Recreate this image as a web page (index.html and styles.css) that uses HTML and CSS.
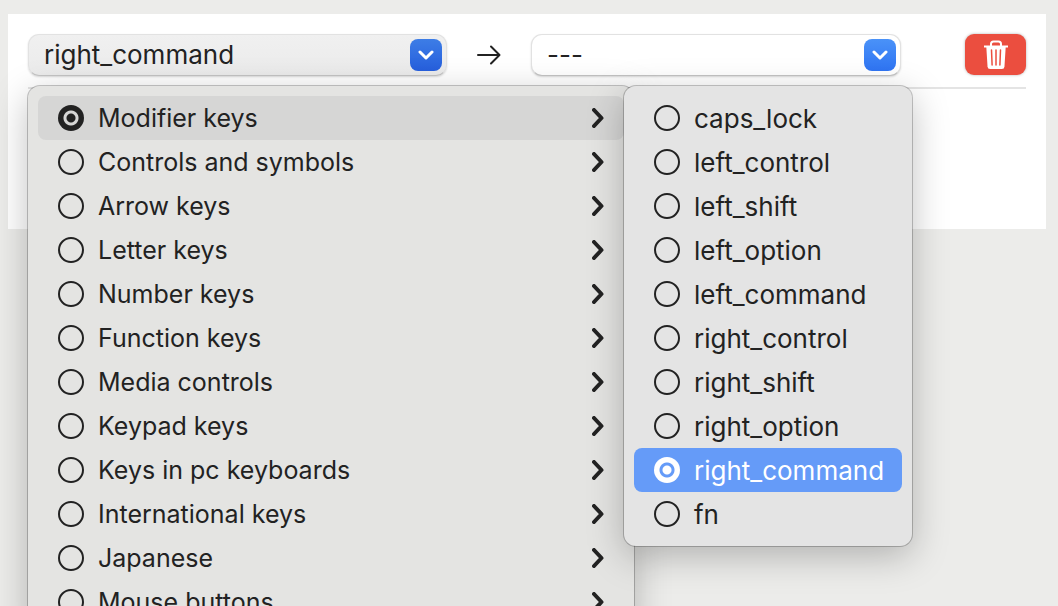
FILE: index.html
```html
<!DOCTYPE html>
<html lang="en">
<head>
  <meta charset="UTF-8">
  <title>Simple Modifications</title>
  <link rel="stylesheet" href="styles.css">
</head>
<body>
  <main class="panel">
    <div class="row">
      <div class="field">
        <select class="picker picker-open" aria-label="From key">
          <option>right_command</option>
        </select>
        <span class="picker-badge badge-pressed">
          <svg width="16" height="10" viewBox="0 0 16 10"><path d="M2 2l6 6 6-6"/></svg>
        </span>

        <!-- Key category menu -->
        <div class="menu main-menu">
          <label class="item item-active"><input type="radio" name="category" checked>Modifier keys<svg class="more" viewBox="0 0 12 20"><path d="M2 2l7.500 8L2 18"/></svg></label>
          <label class="item"><input type="radio" name="category">Controls and symbols<svg class="more" viewBox="0 0 12 20"><path d="M2 2l7.500 8L2 18"/></svg></label>
          <label class="item"><input type="radio" name="category">Arrow keys<svg class="more" viewBox="0 0 12 20"><path d="M2 2l7.500 8L2 18"/></svg></label>
          <label class="item"><input type="radio" name="category">Letter keys<svg class="more" viewBox="0 0 12 20"><path d="M2 2l7.500 8L2 18"/></svg></label>
          <label class="item"><input type="radio" name="category">Number keys<svg class="more" viewBox="0 0 12 20"><path d="M2 2l7.500 8L2 18"/></svg></label>
          <label class="item"><input type="radio" name="category">Function keys<svg class="more" viewBox="0 0 12 20"><path d="M2 2l7.500 8L2 18"/></svg></label>
          <label class="item"><input type="radio" name="category">Media controls<svg class="more" viewBox="0 0 12 20"><path d="M2 2l7.500 8L2 18"/></svg></label>
          <label class="item"><input type="radio" name="category">Keypad keys<svg class="more" viewBox="0 0 12 20"><path d="M2 2l7.500 8L2 18"/></svg></label>
          <label class="item"><input type="radio" name="category">Keys in pc keyboards<svg class="more" viewBox="0 0 12 20"><path d="M2 2l7.500 8L2 18"/></svg></label>
          <label class="item"><input type="radio" name="category">International keys<svg class="more" viewBox="0 0 12 20"><path d="M2 2l7.500 8L2 18"/></svg></label>
          <label class="item"><input type="radio" name="category">Japanese<svg class="more" viewBox="0 0 12 20"><path d="M2 2l7.500 8L2 18"/></svg></label>
          <label class="item"><input type="radio" name="category">Mouse buttons<svg class="more" viewBox="0 0 12 20"><path d="M2 2l7.500 8L2 18"/></svg></label>
        </div>

        <!-- Modifier keys submenu -->
        <div class="menu sub-menu">
          <label class="item"><input type="radio" name="key">caps_lock</label>
          <label class="item"><input type="radio" name="key">left_control</label>
          <label class="item"><input type="radio" name="key">left_shift</label>
          <label class="item"><input type="radio" name="key">left_option</label>
          <label class="item"><input type="radio" name="key">left_command</label>
          <label class="item"><input type="radio" name="key">right_control</label>
          <label class="item"><input type="radio" name="key">right_shift</label>
          <label class="item"><input type="radio" name="key">right_option</label>
          <label class="item item-selected"><input type="radio" name="key" checked>right_command</label>
          <label class="item"><input type="radio" name="key">fn</label>
        </div>
      </div>

      <svg class="arrow" width="26" height="20" viewBox="0 0 26 20"><path d="M2 10h21M15 1.500l8.500 8.500-8.500 8.500"/></svg>

      <div class="field">
        <select class="picker" aria-label="To key">
          <option>---</option>
        </select>
        <span class="picker-badge">
          <svg width="16" height="10" viewBox="0 0 16 10"><path d="M2 2l6 6 6-6"/></svg>
        </span>
      </div>

      <button class="delete" type="button" aria-label="Delete">
        <svg width="26" height="30" viewBox="0 0 26 30">
          <path d="M8 6V4q0-2.500 2.500-2.500h5Q18 1.500 18 4v2" fill="none" stroke="#fff" stroke-width="2"/>
          <path d="M1 5.500h24v2H1z" fill="#fff"/>
          <path d="M3.300 7h19.400l-1.200 19.500q-.2 2.500-2.700 2.500H7.200q-2.500 0-2.700-2.500z" fill="#fff"/>
          <path d="M8.500 10l.6 15M13 10v15M17.500 10l-.6 15" fill="none" stroke="#eb4e3f" stroke-width="1.500" stroke-linecap="round"/>
        </svg>
      </button>
    </div>
  </main>
</body>
</html>
```
FILE: styles.css
```css
* { box-sizing: border-box; }

body {
  margin: 0;
  min-height: 100vh;
  padding: 14px 12px 0 8px;
  overflow: hidden;
  background: #ececea;
  color: #222;
  font-family: Inter, "Liberation Sans", sans-serif;
  font-size: 26px;
}

.panel {
  min-height: 215px;
  padding: 20px;
  background: #fff;
}

.row {
  display: grid;
  grid-template-columns: 419fr 84px 370fr 64px 61px;
  align-items: start;
  padding-bottom: 11px;
  border-bottom: 2px solid #e4e4e4;
}

.field { position: relative; }

/* Popup buttons */
.picker {
  display: block;
  width: 100%;
  height: 42px;
  padding: 0 48px 2px 15px;
  appearance: none;
  border: 1px solid #e2e2e2;
  border-bottom-color: #c4c4c4;
  border-radius: 11px;
  background: #fff;
  box-shadow: 0 1px 2px rgba(0, 0, 0, 0.15);
  color: inherit;
  font: inherit;
}
.picker-open { background: linear-gradient(#f0f0f0, #ebebeb); }

.picker-badge {
  position: absolute;
  top: 5px;
  right: 5px;
  display: flex;
  align-items: center;
  justify-content: center;
  width: 32px;
  height: 32px;
  border-radius: 8px;
  background: linear-gradient(#4a92f8, #2f74f3);
  pointer-events: none;
}
.badge-pressed { background: linear-gradient(#3d7de6, #265fdd); }
.picker-badge path { fill: none; stroke: #fff; stroke-width: 3; stroke-linecap: round; stroke-linejoin: round; }

.arrow { align-self: center; justify-self: center; }
.arrow path { fill: none; stroke: #222; stroke-width: 2; stroke-linecap: round; stroke-linejoin: round; }

.delete {
  grid-column: 5;
  display: flex;
  align-items: center;
  justify-content: center;
  height: 41px;
  padding: 0;
  border: none;
  border-radius: 9px;
  background: #eb4e3f;
  box-shadow: 0 0 3px rgba(0, 0, 0, 0.3);
}

/* Menus */
.menu {
  position: absolute;
  top: 52px;
  padding: 10px;
  border-radius: 12px;
  box-shadow: 0 0 0 1px rgba(0, 0, 0, 0.22), 0 10px 36px rgba(0, 0, 0, 0.25);
}
.main-menu { left: 0; z-index: 1; width: 606px; background: #e4e4e2; font-size: 25px; }
.sub-menu { left: 596px; z-index: 2; width: 288px; background: #e4e4e4; }

.item {
  display: flex;
  align-items: center;
  gap: 14px;
  height: 44px;
  padding: 0 20px;
  border-radius: 8px;
  white-space: nowrap;
}
.item-active { background: #d6d6d5; }
.item-selected { background: #659bf8; color: #fff; }

.item input {
  flex: none;
  appearance: none;
  width: 26px;
  height: 26px;
  margin: 0;
  border: 2px solid currentColor;
  border-radius: 50%;
  color: inherit;
}
.item input:checked {
  border: none;
  background: radial-gradient(circle, currentColor 4px, #d6d6d5 5px, #d6d6d5 7px, currentColor 8px);
}
.item-selected input:checked {
  background: radial-gradient(circle, #fff 4px, #659bf8 5px, #659bf8 7px, #fff 8px);
}

.more { width: 12px; height: 20px; margin-left: auto; }
.more path { fill: none; stroke: #222; stroke-width: 4; stroke-linecap: round; stroke-linejoin: round; }
```
